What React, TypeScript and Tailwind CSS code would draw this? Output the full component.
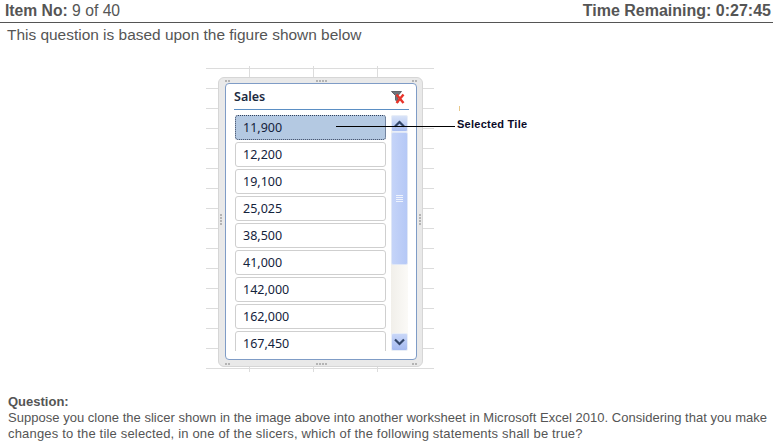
const tiles = ["12,200", "19,100", "25,025", "38,500", "41,000", "142,000", "162,000", "167,450"];

function Grid() {
  const hs = Array.from({ length: 16 }, (_, i) => 2.5 + i * 20);
  return (
    <svg className="absolute left-0 top-0" width="228" height="306" aria-hidden="true">
      {hs.map((y) => (
        <line key={y} x1="0" x2="228" y1={y} y2={y} stroke="#dcdcdc" />
      ))}
      {[43.5, 107.5, 171.5].map((x) => (
        <line key={x} x1={x} x2={x} y1="0" y2="306" stroke="#dcdcdc" />
      ))}
    </svg>
  );
}

function Dots({ n }: { n: number }) {
  return (
    <div className="flex gap-px">
      {Array.from({ length: n }, (_, i) => (
        <span key={i} className="h-[2px] w-[2px] bg-[#b4b4b4]" />
      ))}
    </div>
  );
}

function SideDots() {
  return (
    <div className="flex flex-col gap-px">
      {[0, 1, 2, 3].map((i) => (
        <span key={i} className="h-[2px] w-[2px] bg-[#b4b4b4]" />
      ))}
    </div>
  );
}

function FilterClear() {
  return (
    <svg width="14" height="13" viewBox="0 0 14 13" aria-hidden="true">
      <path d="M0.5 0.5h10L7 4.5v7L4.5 9V4.5z" fill="#6f747b" stroke="#4c5056" strokeWidth="0.8" />
      <path d="M5.5 3.5l7 8.5M12.5 3.5L5.5 12" stroke="#e8342a" strokeWidth="2.4" />
    </svg>
  );
}

function Chevron({ up }: { up?: boolean }) {
  return (
    <svg width="11" height="8" viewBox="0 0 11 8" aria-hidden="true">
      <path d={up ? "M1 6.5L5.5 2 10 6.5" : "M1 1.5L5.5 6 10 1.5"} fill="none" stroke="#33476b" strokeWidth="2.2" />
    </svg>
  );
}

function Tile({ label, selected }: { label: string; selected?: boolean }) {
  return (
    <div
      className={
        selected
          ? "flex h-[25px] w-[151px] shrink-0 items-center rounded-[3px] border border-dotted border-[#33415c] bg-[#b4c9e2] pl-[7px] pt-[1px] font-['Noto_Sans',sans-serif] text-[12.5px] text-[#14233c]"
          : "flex h-[25px] w-[151px] shrink-0 items-center rounded-[3px] border border-[#cfcfcf] bg-white pl-[7px] pt-[1px] font-['Noto_Sans',sans-serif] text-[12.5px] text-[#14233c]"
      }
    >
      {label}
    </div>
  );
}

function Scrollbar() {
  return (
    <div className="flex h-[236px] w-[17px] flex-col rounded-[2px] bg-gradient-to-r from-[#f1efea] to-[#fbfaf7]">
      <div className="flex h-[17px] shrink-0 items-center justify-center rounded-[2px] border border-[#e8eef8] bg-gradient-to-b from-[#d8e3f8] to-[#a9bdf0]">
        <Chevron up />
      </div>
      <div className="flex h-[133px] shrink-0 items-center justify-center rounded-[2px] border border-[#dfe7f7] bg-gradient-to-r from-[#c5d4f8] to-[#b5c8f6]">
        <div className="flex flex-col gap-px">
          {[0, 1, 2, 3].map((i) => (
            <span key={i} className="h-px w-[7px] bg-[#eef3fd]" />
          ))}
        </div>
      </div>
      <div className="flex-1" />
      <div className="flex h-[18px] shrink-0 items-center justify-center rounded-[2px] border border-[#e8eef8] bg-gradient-to-b from-[#c9d7f8] to-[#a5baf0]">
        <Chevron />
      </div>
    </div>
  );
}

function Slicer() {
  return (
    <div className="relative ml-[206px] mt-[21px] h-[306px] w-[228px] pl-[12px] pt-[11px]">
      <Grid />
      <div className="relative flex h-[290px] w-[205px] flex-col rounded-[6px] border border-[#d6d6d6] bg-[#e9e9e9] pl-[6px] pr-[5px]">
        <div className="flex h-[5px] items-center justify-between">
          <Dots n={2} />
          <Dots n={4} />
          <Dots n={2} />
        </div>
        <div className="flex h-[277px] flex-col rounded-[4px] border border-[#7f9cc6] bg-white pl-[8px] pr-[7px]">
          <div className="flex h-[26px] shrink-0 items-center justify-between border-b border-[#5b8fc4] pr-[4px] pt-[1px]">
            <span className="font-['Noto_Sans',sans-serif] text-[12.5px] font-semibold text-[#1b2a41]">Sales</span>
            <FilterClear />
          </div>
          <div className="mt-[5px] flex gap-[5px]">
            <div className="flex h-[236px] flex-col gap-[2px] overflow-hidden pl-px">
              <Tile label="11,900" selected />
              {tiles.map((t) => (
                <Tile key={t} label={t} />
              ))}
            </div>
            <Scrollbar />
          </div>
        </div>
        <div className="mt-[1px] flex h-[5px] items-center justify-between">
          <Dots n={2} />
          <Dots n={4} />
          <Dots n={2} />
        </div>
        <div className="absolute left-[1px] top-[136px]">
          <SideDots />
        </div>
        <div className="absolute right-[1px] top-[136px]">
          <SideDots />
        </div>
      </div>
      <div className="absolute left-[130px] top-[60px] h-px w-[119px] bg-black" />
      <span className="absolute left-[251px] top-[51px] whitespace-nowrap font-['Liberation_Sans',sans-serif] text-[11px] font-bold leading-[14px] tracking-[0.25px] text-[#0a0a28]">
        Selected Tile
      </span>
      <span className="absolute left-[253px] top-[40px] h-[5px] w-px bg-[#e8c88a]" />
    </div>
  );
}

export default function App() {
  return (
    <div className="h-[446px] w-[773px] overflow-hidden bg-white font-['Liberation_Sans',sans-serif] text-[#555555]">
      <div className="flex h-[23px] items-center justify-between border-b border-[#555555] pl-[5px] pr-[2px] text-[16px] leading-[20px]">
        <div className="text-[15.7px]">
          <b>Item No:</b> 9 of 40
        </div>
        <b>Time Remaining: 0:27:45</b>
      </div>
      <div className="pl-[7px] pt-[2px] text-[15.45px] leading-[20px]">This question is based upon the figure shown below</div>
      <Slicer />
      <div className="pl-[8px] pr-[4px] pt-[22px] text-[13px] leading-[16px]">
        <b className="block">Question:</b>
        <span className="block whitespace-nowrap tracking-[0.025px]">
          Suppose you clone the slicer shown in the image above into another worksheet in Microsoft Excel 2010. Considering that you make
        </span>
        <span className="block whitespace-nowrap tracking-[0.18px]">
          changes to the tile selected, in one of the slicers, which of the following statements shall be true?
        </span>
      </div>
    </div>
  );
}
